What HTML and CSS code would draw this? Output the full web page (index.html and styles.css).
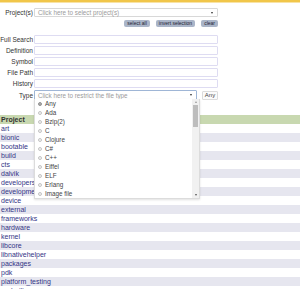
FILE: index.html
```html
<!DOCTYPE html>
<html>
<head>
<meta charset="utf-8">
<link rel="stylesheet" href="styles.css">
</head>
<body>
<div class="topbar"></div>
<form class="search">
  <div class="row first">
    <label class="lbl">Project(s)</label>
    <div class="chosen wide"><span class="ph">Click here to select project(s)</span><span class="arrow"></span></div>
  </div>
  <div class="btns">
    <span class="btn">select all</span>
    <span class="btn">invert selection</span>
    <span class="btn">clear</span>
  </div>
  <div class="fields">
    <label class="lbl">Full Search</label><div class="inp"></div>
    <label class="lbl">Definition</label><div class="inp"></div>
    <label class="lbl">Symbol</label><div class="inp"></div>
    <label class="lbl">File Path</label><div class="inp"></div>
    <label class="lbl">History</label><div class="inp"></div>
    <label class="lbl">Type</label>
    <div class="typerow">
      <div class="chosen type"><span class="ph">Click here to restrict the file type</span><span class="arrow"></span></div>
      <span class="anybtn">Any</span>
    </div>
  </div>
</form>
<div class="projects">
  <div class="prow head">Project</div>
  <div class="prow">art</div>
  <div class="prow alt">bionic</div>
  <div class="prow">bootable</div>
  <div class="prow alt">build</div>
  <div class="prow">cts</div>
  <div class="prow alt">dalvik</div>
  <div class="prow">developers</div>
  <div class="prow alt">development</div>
  <div class="prow">device</div>
  <div class="prow alt">external</div>
  <div class="prow">frameworks</div>
  <div class="prow alt">hardware</div>
  <div class="prow">kernel</div>
  <div class="prow alt">libcore</div>
  <div class="prow">libnativehelper</div>
  <div class="prow alt">packages</div>
  <div class="prow">pdk</div>
  <div class="prow alt">platform_testing</div>
  <div class="prow">prebuilts</div>
</div>
<div class="dropdown">
  <ul class="opts">
    <li><span class="radio on"></span>Any</li>
    <li><span class="radio"></span>Ada</li>
    <li><span class="radio"></span>Bzip(2)</li>
    <li><span class="radio"></span>C</li>
    <li><span class="radio"></span>Clojure</li>
    <li><span class="radio"></span>C#</li>
    <li><span class="radio"></span>C++</li>
    <li><span class="radio"></span>Eiffel</li>
    <li><span class="radio"></span>ELF</li>
    <li><span class="radio"></span>Erlang</li>
    <li><span class="radio"></span>Image file</li>
  </ul>
  <div class="sbar"><span class="up"></span><span class="thumb"></span><span class="down"></span></div>
</div>
</body>
</html>
```
FILE: styles.css
```css
html, body {
  margin: 0;
  padding: 0;
  width: 300px;
  height: 289px;
  overflow: hidden;
  background: #fff;
  font-family: "Liberation Sans", Arial, sans-serif;
  color: #333;
  position: relative;
}
.topbar {
  height: 2px;
  background: #f1c64a;
  border-bottom: 1px solid #f8e3a6;
}
.search {
  display: block;
  padding-top: 5px;
}
.row {
  display: flex;
  align-items: center;
}
.lbl {
  width: 33px;
  padding-right: 1px;
  text-align: right;
  font-size: 6.5px;
  color: #333;
  line-height: 9px;
  white-space: nowrap;
}
.chosen {
  box-sizing: border-box;
  height: 9px;
  border: 1px solid #d8d8d8;
  border-radius: 1px;
  background: #fff;
  display: flex;
  align-items: center;
  justify-content: space-between;
  padding: 0 4px 0 3px;
}
.wide { width: 184px; }
.ph {
  font-size: 6.3px;
  color: #9a9a9a;
  white-space: nowrap;
}
.arrow {
  width: 0;
  height: 0;
  border-left: 1.5px solid transparent;
  border-right: 1.5px solid transparent;
  border-top: 2px solid #333;
}
.btns {
  display: flex;
  justify-content: flex-end;
  gap: 6px;
  width: 218px;
  margin-top: 3px;
}
.btn {
  height: 7px;
  line-height: 7px;
  padding: 0 3px;
  font-size: 5px;
  color: #223;
  background: #aab5c8;
  border-radius: 2px;
  white-space: nowrap;
}
.fields {
  display: grid;
  grid-template-columns: 34px 184px;
  row-gap: 2px;
  margin-top: 8px;
  align-items: center;
}
.fields .lbl { line-height: 9px; }
.inp {
  box-sizing: border-box;
  height: 8.6px;
  border: 1px solid #dedcf2;
  border-radius: 1px;
  background: #fff;
}
.typerow {
  display: flex;
  align-items: center;
  gap: 5px;
}
.type {
  width: 163px;
  border-color: #9fb6d6;
  height: 10px;
}
.anybtn {
  box-sizing: border-box;
  width: 16px;
  height: 9px;
  line-height: 7px;
  border: 1px solid #dcdcdc;
  border-radius: 1px;
  font-size: 6px;
  text-align: center;
  color: #444;
  background: #fbfbfb;
}
.projects {
  margin-top: 15px;
}
.prow {
  height: 9px;
  line-height: 9px;
  font-size: 7px;
  color: #343486;
  white-space: nowrap;
  padding-left: 1px;
}
.prow.alt { background: #e6e6ef; }
.prow.head {
  background: #c8d8b0;
  font-weight: bold;
  color: #333;
}
.dropdown {
  position: absolute;
  left: 34px;
  top: 99px;
  width: 166px;
  height: 100px;
  box-sizing: border-box;
  background: #fff;
  border: 1px solid #dcdcdc;
  border-top: none;
  box-shadow: 0 1px 2px rgba(0,0,0,0.12);
  display: flex;
}
.opts {
  list-style: none;
  margin: 0;
  padding: 0 0 0 3px;
  flex: 1;
}
.opts li {
  height: 9px;
  line-height: 9px;
  font-size: 6.3px;
  color: #444;
  display: flex;
  align-items: center;
  gap: 3px;
}
.radio {
  box-sizing: border-box;
  width: 4px;
  height: 4px;
  border-radius: 50%;
  border: 1px solid #c4c4c4;
  background: #f2f2f2;
}
.radio.on {
  border-color: #999;
  background: #555;
  box-shadow: inset 0 0 0 0.5px #ddd;
}
.sbar {
  width: 7px;
  background: #f1f1f1;
  display: flex;
  flex-direction: column;
  align-items: center;
}
.sbar .up, .sbar .down {
  width: 0;
  height: 0;
  border-left: 1.5px solid transparent;
  border-right: 1.5px solid transparent;
  margin: 2px 0;
}
.sbar .up { border-bottom: 2px solid #999; }
.sbar .down { border-top: 2px solid #555; margin-top: auto; }
.sbar .thumb {
  width: 5px;
  height: 22px;
  background: #bdbdbd;
}
```
